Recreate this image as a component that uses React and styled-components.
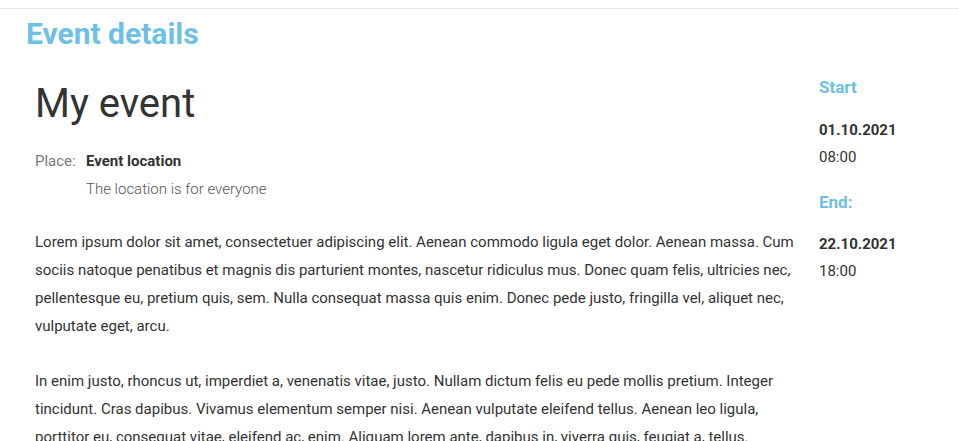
import React from "react";
import styled, { createGlobalStyle } from "styled-components";

const Global = createGlobalStyle`
  html, body { margin: 0; padding: 0; background: #fff; }
  body { font-family: Roboto, "Noto Sans", sans-serif; color: #333; }
`;

const Page = styled.div`
  padding-top: 8px;
`;

const TopRule = styled.div`
  border-top: 1px solid #e6e6e6;
`;

const PageTitle = styled.h1`
  margin: 0;
  padding: 8px 0 0 26px;
  font-size: 30px;
  line-height: 34px;
  font-weight: 700;
  color: #6ec1e4;
`;

const Layout = styled.div`
  display: grid;
  grid-template-columns: 765px 1fr;
  column-gap: 19px;
  padding: 28px 0 0 35px;
`;

const Main = styled.main``;

const EventName = styled.h2`
  margin: 0;
  font-size: 40px;
  line-height: 50px;
  font-weight: 400;
  color: #333;
`;

const PlaceRow = styled.div`
  display: grid;
  grid-template-columns: 51px 1fr;
  margin-top: 18px;
  font-size: 15px;
  line-height: 28px;
`;

const Label = styled.span`
  color: #7a7a7a;
  font-weight: 400;
`;

const PlaceName = styled.div`
  font-weight: 700;
  color: #333;
`;

const PlaceNote = styled.div`
  font-weight: 300;
  color: #555;
`;

const Paragraph = styled.p`
  margin: ${(p) => (p.$first ? "25px" : "27px")} 0 0;
  font-size: 15px;
  line-height: 28px;
  color: #333;
`;

const Aside = styled.aside``;

const SideHeading = styled.h3`
  margin: ${(p) => p.$mt}px 0 0;
  font-size: 17px;
  line-height: 16px;
  font-weight: 700;
  color: #6ec1e4;
`;

const DateText = styled.div`
  margin-top: ${(p) => p.$mt}px;
  font-size: 15px;
  line-height: 27px;
  font-weight: 700;
`;

const TimeText = styled.div`
  font-size: 15px;
  line-height: 27px;
`;

export default function App() {
  return (
    <>
      <Global />
      <Page>
        <TopRule />
        <PageTitle>Event details</PageTitle>
        <Layout>
          <Main>
            <EventName>My event</EventName>
            <PlaceRow>
              <Label>Place:</Label>
              <div>
                <PlaceName>Event location</PlaceName>
                <PlaceNote>The location is for everyone</PlaceNote>
              </div>
            </PlaceRow>
            <Paragraph $first>
              Lorem ipsum dolor sit amet, consectetuer adipiscing elit. Aenean commodo ligula eget dolor. Aenean massa. Cum sociis natoque penatibus et magnis dis parturient montes, nascetur ridiculus mus. Donec quam felis, ultricies nec, pellentesque eu, pretium quis, sem. Nulla consequat massa quis enim. Donec pede justo, fringilla vel, aliquet nec, vulputate eget, arcu.
            </Paragraph>
            <Paragraph>
              In enim justo, rhoncus ut, imperdiet a, venenatis vitae, justo. Nullam dictum felis eu pede mollis pretium. Integer tincidunt. Cras dapibus. Vivamus elementum semper nisi. Aenean vulputate eleifend tellus. Aenean leo ligula, porttitor eu, consequat vitae, eleifend ac, enim. Aliquam lorem ante, dapibus in, viverra quis, feugiat a, tellus.
            </Paragraph>
          </Main>
          <Aside>
            <SideHeading $mt={0}>Start</SideHeading>
            <DateText $mt={22}>01.10.2021</DateText>
            <TimeText>08:00</TimeText>
            <SideHeading $mt={23}>End:</SideHeading>
            <DateText $mt={21}>22.10.2021</DateText>
            <TimeText>18:00</TimeText>
          </Aside>
        </Layout>
      </Page>
    </>
  );
}
